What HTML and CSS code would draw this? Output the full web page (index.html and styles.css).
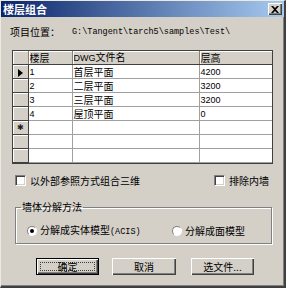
FILE: index.html
```html
<!DOCTYPE html>
<html>
	<head>
		<meta charset="UTF-8">
		<title>楼层组合</title>
		<link rel="stylesheet" href="styles.css">
	</head>
	<body>
		<div class="window">
			<div class="titlebar">
				<span class="title">楼层组合</span>
				<span class="close">
					<svg width="8" height="7" viewBox="0 0 8 7"><path d="M0 0h2l2 2 2-2h2L5 3.5 8 7H6L4 5 2 7H0l3-3.5z" fill="#000"/></svg>
				</span>
			</div>
			<div class="path-row">
				<span class="label">项目位置：</span><span class="path">G:\Tangent\tarch5\samples\Test\</span>
			</div>
			<div class="grid-wrap">
				<table class="grid">
					<colgroup>
						<col class="c0"><col class="c1"><col class="c2"><col class="c3">
					</colgroup>
					<tr class="head"><th class="rh"></th><th>楼层</th><th><span class="num">DWG</span>文件名</th><th>层高</th></tr>
					<tr><td class="rh"><span class="arrow"></span></td><td class="num">1</td><td>首层平面</td><td class="num">4200</td></tr>
					<tr><td class="rh"></td><td class="num">2</td><td>二层平面</td><td class="num">3200</td></tr>
					<tr><td class="rh"></td><td class="num">3</td><td>三层平面</td><td class="num">3200</td></tr>
					<tr><td class="rh"></td><td class="num">4</td><td>屋顶平面</td><td class="num">0</td></tr>
					<tr><td class="rh star">✱</td><td></td><td></td><td></td></tr>
					<tr><td class="rh"></td><td></td><td></td><td></td></tr>
					<tr><td class="rh"></td><td></td><td></td><td></td></tr>
					<tr><td class="rh"></td><td></td><td></td><td></td></tr>
				</table>
			</div>
			<div class="options">
				<label class="check"><span class="box"></span><span>以外部参照方式组合三维</span></label>
				<label class="check right"><span class="box"></span><span>排除内墙</span></label>
			</div>
			<fieldset class="group">
				<legend>墙体分解方法</legend>
				<label class="radio first"><span class="dot on"></span><span>分解成实体模型<span class="mono">(ACIS)</span></span></label>
				<label class="radio"><span class="dot"></span><span>分解成面模型</span></label>
			</fieldset>
			<div class="buttons">
				<span class="btn default"><span class="focus">确定</span></span>
				<span class="btn cancel">取消</span>
				<span class="btn file">选文件...</span>
			</div>
		</div>
	</body>
</html>
```

FILE: styles.css
```css
body{
	margin: 0;
	padding: 0;
	background: #d4d0c8;
	font-family: "Noto Sans CJK SC", sans-serif;
	font-size: 10px;
	color: #000;
}
.window{
	width: 286px;
	height: 288px;
	box-sizing: border-box;
	background: #d4d0c8;
	border-top: 1px solid #ece9e2;
	border-left: 1px solid #ece9e2;
	border-right: 2px solid #404040;
	border-bottom: 2px solid #404040;
	box-shadow: inset -1px -1px 0 #808080;
	overflow: hidden;
}
.titlebar{
	height: 16px;
	display: flex;
	align-items: center;
	background: linear-gradient(to right, #0a246a, #a6caf0);
	padding: 0 2px 0 2px;
}
.title{
	color: #fff;
	font-weight: bold;
	font-size: 11px;
	line-height: 16px;
	flex: 1;
}
.close{
	width: 14px;
	height: 12px;
	box-sizing: border-box;
	background: #d4d0c8;
	display: flex;
	align-items: center;
	justify-content: center;
	box-shadow: inset 1px 1px 0 #fff, inset -1px -1px 0 #404040, inset -2px -2px 0 #808080;
}
.path-row{
	margin: 9px 0 0 9px;
	height: 12px;
	line-height: 12px;
	display: flex;
	align-items: center;
}
.label{
	width: 62px;
}
.path{
	font-family: "Liberation Mono", monospace;
	font-size: 8.5px;
}
.grid-wrap{
	margin: 12px 0 0 11px;
	width: 261px;
	height: 114px;
	box-sizing: border-box;
	border: 1px solid #404040;
	overflow: hidden;
	background: #fff;
}
.grid{
	border-collapse: collapse;
	table-layout: fixed;
	width: 259px;
}
.c0{ width: 15px; }
.c1{ width: 44px; }
.c2{ width: 127px; }
.c3{ width: 73px; }
.grid th, .grid td{
	padding: 0 0 0 1px;
	height: 13px;
	text-align: left;
	font-weight: normal;
	line-height: 12px;
	border-right: 1px solid #a0a0a0;
	border-bottom: 1px solid #a0a0a0;
	white-space: nowrap;
}
.grid .head th{
	height: 12px;
	background: #d4d0c8;
	border-right: 1px solid #808080;
	border-bottom: 1px solid #404040;
	box-shadow: inset 1px 1px 0 #fff;
}
.grid .rh{
	background: #d4d0c8;
	border-right: 1px solid #404040;
	border-bottom: 1px solid #404040;
	box-shadow: inset 1px 1px 0 #fff;
	text-align: center;
	padding: 0;
}
.num{
	font-family: "Liberation Sans", sans-serif;
	font-size: 9px;
}
.arrow{
	display: inline-block;
	width: 0;
	height: 0;
	border-top: 4px solid transparent;
	border-bottom: 4px solid transparent;
	border-left: 5px solid #000;
	vertical-align: middle;
}
.star{
	font-family: "DejaVu Sans", sans-serif;
	font-size: 8px;
	color: #202020;
}
.options{
	margin: 11px 0 0 14px;
	padding-right: 15px;
	height: 11px;
	display: flex;
	align-items: center;
}
.check, .radio{
	display: flex;
	align-items: center;
	line-height: 11px;
}
.check.right{
	margin-left: auto;
}
.box{
	width: 11px;
	height: 11px;
	box-sizing: border-box;
	background: #fff;
	border-top: 1px solid #808080;
	border-left: 1px solid #808080;
	border-right: 1px solid #fff;
	border-bottom: 1px solid #fff;
	box-shadow: inset 1px 1px 0 #404040, inset -1px -1px 0 #d4d0c8;
	margin-right: 4px;
}
.group{
	margin: 15px 0 0 14px;
	width: 257px;
	box-sizing: border-box;
	height: 43px;
	padding: 5px 0 0 0;
	border: 1px solid #808080;
	box-shadow: inset 1px 1px 0 #fff, 1px 1px 0 #fff;
	display: flex;
	align-items: center;
}
.group legend{
	padding: 0 1px;
	margin-left: 5px;
	line-height: 12px;
}
.radio.first{
	width: 145px;
	margin-left: 11px;
}
.dot{
	width: 10px;
	height: 10px;
	box-sizing: border-box;
	border-radius: 50%;
	background: #fff;
	border: 1px solid;
	border-color: #808080 #fff #fff #808080;
	margin-right: 3px;
	display: flex;
	align-items: center;
	justify-content: center;
}
.dot.on::after{
	content: "";
	width: 4px;
	height: 4px;
	border-radius: 50%;
	background: #000;
}
.mono{
	font-family: "Liberation Mono", monospace;
	font-size: 8.5px;
}
.buttons{
	margin: 14px 0 0 35px;
	display: flex;
}
.btn{
	width: 63px;
	height: 17px;
	box-sizing: border-box;
	display: flex;
	align-items: center;
	justify-content: center;
	background: #d4d0c8;
	box-shadow: inset 1px 1px 0 #fff, inset -1px -1px 0 #404040, inset -2px -2px 0 #808080;
}
.btn.default{
	border: 1px solid #000;
	padding: 3px;
}
.focus{
	width: 100%;
	height: 100%;
	box-sizing: border-box;
	border: 1px dotted #404040;
	display: flex;
	align-items: center;
	justify-content: center;
}
.btn.cancel{
	margin-left: 13px;
	width: 64px;
}
.btn.file{
	margin-left: 15px;
}
```
